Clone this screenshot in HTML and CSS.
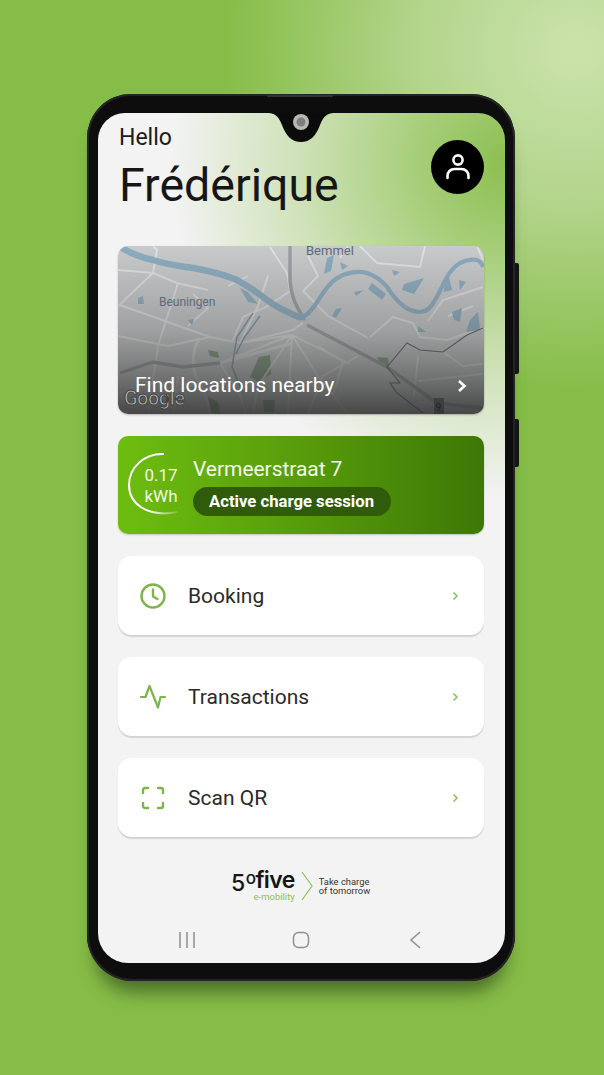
FILE: index.html
```html
<!doctype html>
<html>
    <head>
        <title>50five e-mobility</title>
        <meta charset="utf-8">
        <link rel="stylesheet" href="styles.css">
    </head>
    <body>
        <div class="stage">
            <div class="phone">
                <span class="side-btn side-btn-power"></span>
                <span class="side-btn side-btn-volume"></span>
                <span class="speaker"></span>
                <div class="screen">
                    <!-- teardrop notch sits over the status area -->
                    <svg class="notch" width="64" height="31" viewBox="0 0 64 31">
                        <path d="M0 0H64C56 1 54 5 51 12C47 23 41 29 32 29C23 29 17 23 13 12C10 5 8 1 0 0Z" fill="#0b0b0b"/>
                        <circle cx="32" cy="9" r="8" fill="#b9b9b5"/>
                        <circle cx="32" cy="9" r="4.5" fill="#7f7f7f"/>
                    </svg>

                    <header class="header">
                        <div>
                            <p class="hello">Hello</p>
                            <h1 class="name">Frédérique</h1>
                        </div>
                        <div class="avatar">
                            <svg width="30" height="30" viewBox="0 0 30 30" fill="none" stroke="#fff" stroke-width="2.6" stroke-linecap="round">
                                <circle cx="15" cy="8" r="4.6"/>
                                <path d="M4.5 26V24C4.5 20 7.5 17 11.5 17H18.5C22.5 17 25.5 20 25.5 24V26"/>
                            </svg>
                        </div>
                    </header>

                    <a class="map-card">
                        <svg class="map" viewBox="0 0 366 168" preserveAspectRatio="none">
                            <rect width="366" height="168" fill="#d5d7d8"/>
                            <g fill="#7ea57c">
                                <path d="M141 111L152 109L153 128L140 136L132 131Z"/>
                                <path d="M259 111L270 112L271 120L262 118Z"/>
                                <path d="M90 104L100 106L101 112L92 110Z"/>
                                <path d="M145 154L157 154L156 166L146 166Z"/>
                                <path d="M88 150L100 156L102 168L92 166Z"/>
                            </g>
                            <g fill="none" stroke="#f1f2f2" stroke-width="1.9">
                                <path d="M0 60L35 27L39 4L35 0"/>
                                <path d="M0 24L35 27L59 37L90 44"/>
                                <path d="M2 59L92 91L122 97L175 84L185 77"/>
                                <path d="M152 1L169 27L172 45L150 60L125 71L115 94"/>
                                <path d="M242 0L259 17L302 21L307 0"/>
                                <path d="M359 0L365 14"/>
                                <path d="M252 91L275 71L295 77L302 91L329 94L365 82"/>
                                <path d="M365 41L325 54L310 75"/>
                                <path d="M174 89L102 117M174 89L140 140L135 168M174 89L170 168M174 89L200 130L230 168M174 89L232 118M174 89L122 97"/>
                                <path d="M60 37L40 100L30 168M92 91L50 100L0 90"/>
                                <path d="M150 30L140 60L122 97M185 45L210 70L250 92"/>
                                <path d="M200 100L225 116L215 150M240 110L205 130L190 168"/>
                                <path d="M300 110L296 150M325 106L345 120L365 118M300 135L365 128"/>
                                <path d="M102 117L122 150L128 168M82 137L40 150"/>
                                <path d="M75 48L90 62L70 80M110 40L130 30M60 130L55 168"/>
                                <path d="M230 0L222 12M190 10L200 30L185 45M330 70L355 60"/>
                            </g>
                            <g fill="none" stroke="#eceeee" stroke-width="3">
                                <path d="M82 92C72 106 74 128 82 137C87 146 90 156 92 168"/>
                                <path d="M102 117L175 97"/>
                            </g>
                            <g fill="none" stroke="#a0a7aa" stroke-width="3.4">
                                <path d="M172 0V34C173 50 178 60 185 71"/>
                                <path d="M189 79L269 121L319 157L365 162"/>
                                <path d="M2 127L35 116L65 121L102 117"/>
                            </g>
                            <path d="M2 1C14 8 25 12 35 14C50 19 62 20 75 22C92 25 105 28 119 34C130 40 140 47 149 54C157 60 165 64 172 67C177 70 182 72 187 71" fill="none" stroke="#92b6cc" stroke-width="6.5"/>
                            <path d="M185 71C194 66 199 56 205 47C211 38 217 32 225 29C233 26 242 25 249 27C258 30 264 35 269 41C274 48 277 53 282 57C288 63 295 66 302 66C309 66 314 60 317 54C322 46 325 38 329 31C333 24 337 20 342 17C348 14 354 13 359 14C362 15 364 18 365 21" fill="none" stroke="#92b6cc" stroke-width="4.2"/>
                            <path d="M135 67L119 91L114 121L125 147M142 70L126 92L118 108" fill="none" stroke="#7f9eb2" stroke-width="1.5"/>
                            <g fill="#92b6cc">
                                <path d="M122 42L130 46L140 58L130 56Z"/>
                                <path d="M209 12L216 9L213 25L206 28Z"/>
                                <path d="M222 16L230 20L224 24Z"/>
                                <path d="M254 37L268 48L264 54L250 43Z"/>
                                <path d="M218 63L224 62L218 72L214 70Z"/>
                                <path d="M236 46L246 44L238 50Z"/>
                                <path d="M286 38L306 32L296 48L284 44Z"/>
                                <path d="M327 34L331 31L334 44L326 46Z"/>
                                <path d="M341 34L348 36L342 44Z"/>
                                <path d="M352 74L360 66L362 84L348 86Z"/>
                                <path d="M334 66L344 62L342 76L336 74Z"/>
                                <path d="M20 52L25 50L26 58L20 58Z"/>
                                <path d="M70 74L76 73L74 79Z"/>
                                <path d="M300 80L308 86L300 86Z"/>
                                <path d="M274 24L282 26L276 30Z"/>
                            </g>
                            <path d="M365 82L349 89L325 106L302 104L289 97L269 121L282 137L272 137L279 147L305 167" fill="none" stroke="#565b5e" stroke-width="1.1"/>
                            <rect x="316" y="152" width="10" height="16" fill="#55585a"/>
                            <rect width="366" height="168" fill="url(#shade)"/>
                            <defs>
                                <linearGradient id="shade" x1="0" y1="0" x2="0" y2="1">
                                    <stop offset="0" stop-color="#555" stop-opacity=".1"/>
                                    <stop offset=".5" stop-color="#555" stop-opacity=".42"/>
                                    <stop offset="1" stop-color="#333" stop-opacity=".88"/>
                                </linearGradient>
                            </defs>
                        </svg>
                        <span class="map-town map-town-bemmel">Bemmel</span>
                        <span class="map-town map-town-beuningen">Beuningen</span>
                        <span class="map-google">Google</span>
                        <span class="map-nine">9</span>
                        <span class="map-label">Find locations nearby</span>
                        <svg class="map-arrow" width="10" height="14" viewBox="0 0 10 14" fill="none" stroke="#fff" stroke-width="2.6">
                            <path d="M2 2L7.5 7L2 12"/>
                        </svg>
                    </a>

                    <a class="charge-card">
                        <div class="ring">
                            <svg width="64" height="66" viewBox="0 0 64 66" fill="none">
                                <defs>
                                    <linearGradient id="ringFade" x1="0" y1="0" x2="1" y2="1">
                                        <stop offset="0" stop-color="#fff"/>
                                        <stop offset=".7" stop-color="#fff"/>
                                        <stop offset="1" stop-color="#fff" stop-opacity=".1"/>
                                    </linearGradient>
                                </defs>
                                <path d="M38 2C19 1 3 15 3 33C3 51 20 66 52 60" stroke="url(#ringFade)" stroke-width="2"/>
                            </svg>
                            <div class="ring-text">0.17<br>kWh</div>
                        </div>
                        <div class="charge-info">
                            <div class="charge-name">Vermeerstraat 7</div>
                            <div class="pill">Active charge session</div>
                        </div>
                    </a>

                    <a class="menu-card">
                        <svg class="menu-icon" width="28" height="28" viewBox="0 0 28 28" fill="none" stroke="#7db548" stroke-width="2.4" stroke-linecap="round" stroke-linejoin="round">
                            <circle cx="14" cy="14" r="11.5"/>
                            <path d="M14 7.5V14.5L18.5 17"/>
                        </svg>
                        <span class="menu-label">Booking</span>
                        <svg class="menu-arrow" width="7" height="10" viewBox="0 0 7 10" fill="none" stroke="#8cbf5a" stroke-width="1.5">
                            <path d="M1.5 1.5L5 5L1.5 8.5"/>
                        </svg>
                    </a>
                    <a class="menu-card">
                        <svg class="menu-icon" width="28" height="28" viewBox="0 0 28 28" fill="none" stroke="#7db548" stroke-width="2.2" stroke-linecap="round" stroke-linejoin="round">
                            <path d="M2 14H6.5L10.5 3L19 24.5L21.5 14H26"/>
                        </svg>
                        <span class="menu-label">Transactions</span>
                        <svg class="menu-arrow" width="7" height="10" viewBox="0 0 7 10" fill="none" stroke="#8cbf5a" stroke-width="1.5">
                            <path d="M1.5 1.5L5 5L1.5 8.5"/>
                        </svg>
                    </a>
                    <a class="menu-card">
                        <svg class="menu-icon" width="28" height="28" viewBox="0 0 28 28" fill="none" stroke="#7db548" stroke-width="2.4" stroke-linecap="round" stroke-linejoin="round">
                            <path d="M4 9V6C4 4.8 4.8 4 6 4H9"/>
                            <path d="M19 4H22C23.2 4 24 4.8 24 6V9"/>
                            <path d="M24 19V22C24 23.2 23.2 24 22 24H19"/>
                            <path d="M9 24H6C4.8 24 4 23.2 4 22V19"/>
                        </svg>
                        <span class="menu-label">Scan QR</span>
                        <svg class="menu-arrow" width="7" height="10" viewBox="0 0 7 10" fill="none" stroke="#8cbf5a" stroke-width="1.5">
                            <path d="M1.5 1.5L5 5L1.5 8.5"/>
                        </svg>
                    </a>

                    <footer class="brand">
                        <div class="brand-logo">
                            <div class="brand-word"><span class="brand-five">5</span><span class="brand-o">o</span>five</div>
                            <div class="brand-sub">e-mobility</div>
                        </div>
                        <svg width="12" height="30" viewBox="0 0 12 30" fill="none" stroke="#8cc152" stroke-width="1.2">
                            <path d="M1 1L11 15L1 29"/>
                        </svg>
                        <div class="brand-tag">Take charge<br>of tomorrow</div>
                    </footer>

                    <nav class="nav">
                        <svg width="18" height="18" viewBox="0 0 18 18" fill="none" stroke="#8f8f8f" stroke-width="1.5">
                            <path d="M2 1V17M9 1V17M16 1V17"/>
                        </svg>
                        <svg width="18" height="18" viewBox="0 0 18 18" fill="none" stroke="#8f8f8f" stroke-width="1.5">
                            <rect x="1.5" y="1.5" width="15" height="15" rx="5"/>
                        </svg>
                        <svg width="18" height="18" viewBox="0 0 18 18" fill="none" stroke="#8f8f8f" stroke-width="1.5">
                            <path d="M14 1L5 9L14 17"/>
                        </svg>
                    </nav>
                </div>
            </div>
        </div>
    </body>
</html>
```

FILE: styles.css
```css
* {
    box-sizing: border-box;
}

html, body {
    margin: 0;
    height: 100%;
}

body {
    overflow: hidden;
    background: #86bd48;
    font-family: Roboto, 'Liberation Sans', sans-serif;
}

.stage {
    height: 1075px;
    padding: 94px 0 0 87px;
    background: radial-gradient(ellipse 350px 340px at 575px 50px, #cbe3ab 0%, #b3d58c 45%, #86bd48 100%);
}

.phone {
    position: relative;
    width: 428px;
    height: 887px;
    padding: 19px 10px 18px 11px;
    background: #0d0d0d;
    border-radius: 44px 44px 46px 46px;
    box-shadow: 0 20px 18px -9px rgba(50, 75, 25, .7), inset 0 0 0 2px #242424;
}

.side-btn {
    position: absolute;
    right: -4px;
    width: 4px;
    background: #151515;
    border-radius: 0 2px 2px 0;
}

.side-btn-power {
    top: 169px;
    height: 111px;
}

.side-btn-volume {
    top: 325px;
    height: 48px;
}

.speaker {
    position: absolute;
    top: 1px;
    left: 180px;
    width: 66px;
    height: 2px;
    background: #333;
    border-radius: 2px;
}

.screen {
    position: relative;
    display: flex;
    flex-direction: column;
    height: 850px;
    padding: 0 21px 0 20px;
    overflow: hidden;
    border-radius: 27px 27px 30px 30px;
    background:
        radial-gradient(ellipse 335px 335px at 407px 50px, #8cbf50 0%, #a8cf7c 28%, #cfe2b8 62%, rgba(243, 243, 243, 0) 100%),
        #f3f3f3;
}

.notch {
    position: absolute;
    top: 0;
    left: 171px;
}

.header {
    display: flex;
    justify-content: space-between;
    height: 133px;
    padding-top: 14px;
}

.hello {
    margin: 0 0 0 1px;
    font-size: 23px;
    line-height: 22px;
    color: #1c1c1c;
}

.name {
    margin: 8px 0 0 1px;
    font-size: 46.5px;
    font-weight: 400;
    line-height: 56px;
    color: #161616;
}

.avatar {
    display: flex;
    align-items: center;
    justify-content: center;
    width: 53px;
    height: 54px;
    margin-top: 13px;
    background: #000;
    border-radius: 50%;
}

.map-card {
    position: relative;
    display: flex;
    flex: none;
    align-items: flex-end;
    justify-content: space-between;
    height: 168px;
    padding: 0 17px 18px 17px;
    overflow: hidden;
    border-radius: 10px;
    box-shadow: 0 1px 2px rgba(0, 0, 0, .25);
}

.map {
    position: absolute;
    top: 0;
    left: 0;
    width: 100%;
    height: 100%;
    filter: blur(.5px);
}

.map-town {
    position: absolute;
    font-size: 12px;
    color: #5d6b78;
}

.map-town-bemmel {
    top: 0;
    left: 188px;
    font-size: 13px;
    line-height: 9px;
}

.map-town-beuningen {
    top: 49px;
    left: 41px;
}

.map-google {
    position: absolute;
    left: 6px;
    bottom: 6px;
    font-size: 20px;
    font-weight: 500;
    line-height: 20px;
    letter-spacing: -.5px;
    color: #b5b5b5;
    -webkit-text-stroke: 1px #444;
}

.map-nine {
    position: absolute;
    right: 43px;
    bottom: 1px;
    font-size: 10px;
    color: #222;
}

.map-label {
    position: relative;
    font-size: 21px;
    line-height: 22px;
    color: #fff;
}

.map-arrow {
    position: relative;
    margin-bottom: 3px;
}

.charge-card {
    display: flex;
    flex: none;
    align-items: center;
    gap: 3px;
    height: 98px;
    margin-top: 22px;
    padding-left: 8px;
    border-radius: 10px;
    background: linear-gradient(90deg, #6dbd10 0%, #5ca30c 40%, #3d7806 100%);
    box-shadow: 0 1px 2px rgba(0, 0, 0, .2);
}

.ring {
    display: grid;
    width: 64px;
    color: #f2f8e8;
}

.ring svg, .ring-text {
    grid-area: 1 / 1;
}

.ring-text {
    align-self: center;
    padding: 2px 0 0 6px;
    font-size: 17px;
    line-height: 21px;
    text-align: center;
}

.charge-info {
    padding-top: 2px;
    color: #fff;
}

.charge-name {
    font-size: 21px;
    line-height: 26px;
    letter-spacing: -.05px;
    color: #f4f9ec;
}

.pill {
    margin-top: 5px;
    padding: 0 17px 0 16px;
    font-size: 16.7px;
    font-weight: 700;
    line-height: 29px;
    background: #2f5b0b;
    border-radius: 15px;
}

.menu-card {
    display: flex;
    flex: none;
    align-items: center;
    height: 79px;
    margin-top: 22px;
    padding: 0 25px 0 21px;
    background: #fff;
    border-radius: 14px;
    box-shadow: 0 2px 1px rgba(0, 0, 0, .13);
}

.menu-icon {
    flex: none;
}

.menu-label {
    flex: 1;
    margin-left: 21px;
    font-size: 21px;
    color: #2a2a2a;
}

.brand {
    display: flex;
    flex: none;
    align-items: center;
    justify-content: center;
    gap: 6px;
    height: 30px;
    margin-top: 34px;
    padding-right: 1px;
}

.brand-logo {
    width: 64px;
    text-align: right;
}

.brand-word {
    font-family: Inter, sans-serif;
    font-size: 23px;
    font-weight: 600;
    line-height: 20px;
    letter-spacing: -.6px;
    color: #151515;
}

.brand-five {
    position: relative;
    top: 3px;
    font-weight: 500;
}

.brand-o {
    position: relative;
    top: -4px;
    margin-left: 1px;
    font-size: 17px;
    font-weight: 500;
}

.brand-sub {
    font-size: 9.5px;
    line-height: 10px;
    color: #8cc152;
}

.brand-tag {
    font-size: 9.4px;
    line-height: 9.5px;
    color: #333;
}

.nav {
    display: flex;
    flex: 1;
    align-items: center;
    justify-content: space-between;
    padding: 16px 60px 0 60px;
}
```
